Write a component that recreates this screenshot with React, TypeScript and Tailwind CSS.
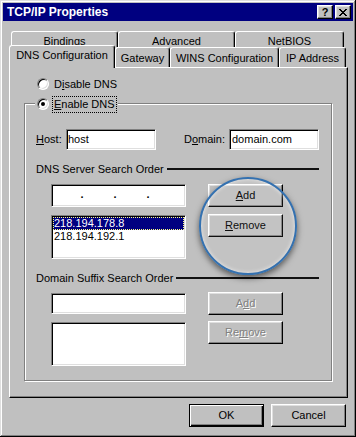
import type { ReactNode } from 'react';

const raised =
  'bg-[#c0c0c0] border border-t-white border-l-white border-r-black border-b-black shadow-[inset_-1px_-1px_#808080,inset_1px_1px_#dfdfdf]';
const sunken =
  'bg-white border border-t-[#808080] border-l-[#808080] border-r-white border-b-white shadow-[inset_1px_1px_#000,inset_-1px_-1px_#dfdfdf]';

function Button({ children, disabled = false, isDefault = false }: { children: ReactNode; disabled?: boolean; isDefault?: boolean }) {
  const frame = isDefault
    ? 'bg-[#c0c0c0] border border-black shadow-[inset_1px_1px_#fff,inset_-1px_-1px_#000,inset_-2px_-2px_#808080]'
    : raised;
  return (
    <div className={`w-[75px] h-[23px] flex items-center justify-center ${frame} ${disabled ? 'text-[#808080] [text-shadow:1px_1px_#fff]' : 'text-black'}`}>
      <span>{children}</span>
    </div>
  );
}

function Radio({ checked = false }: { checked?: boolean }) {
  return (
    <div className="w-[12px] h-[12px] shrink-0 rounded-full bg-white border border-t-[#808080] border-l-[#808080] border-r-white border-b-white shadow-[inset_1px_1px_#000,inset_-1px_-1px_#dfdfdf] flex items-center justify-center">
      {checked && <div className="w-[4px] h-[4px] rounded-full bg-black" />}
    </div>
  );
}

function Key({ children }: { children: ReactNode }) {
  return <u className="underline underline-offset-[1px]">{children}</u>;
}

function SectionLabel({ text }: { text: string }) {
  return (
    <div className="flex items-center h-[12px] ml-[11px] mr-[12px]">
      <span>{text}</span>
      <div className="flex-1 h-[2px] bg-[#111] ml-[3px]" />
    </div>
  );
}

const backTab = 'h-[16px] pt-[4px] bg-[#c0c0c0] border-t border-l border-r border-white border-r-black rounded-t-[3px] shadow-[inset_-1px_0_#808080] flex justify-center';
const frontTab = 'h-[20px] pt-[5px] bg-[#c0c0c0] border-t border-l border-r border-white border-r-black rounded-t-[3px] shadow-[inset_-1px_0_#808080] flex justify-center';

export default function App() {
  return (
    <div className="relative w-[356px] h-[437px] bg-[#c0c0c0] p-[3px] font-['Liberation_Sans',Arial,sans-serif] text-[11px] leading-none text-black shadow-[inset_-1px_-1px_#000,inset_1px_1px_#dfdfdf,inset_-2px_-2px_#808080,inset_2px_2px_#fff]">
      {/* title bar */}
      <div className="h-[18px] bg-[#000080] flex items-center justify-between pl-[4px] pr-[2px]">
        <span className="text-white font-bold text-[12px]">TCP/IP Properties</span>
        <div className="flex gap-[2px]">
          <div className={`${raised} w-[16px] h-[14px] flex items-center justify-center font-bold text-[11px]`}>?</div>
          <div className={`${raised} w-[16px] h-[14px] flex items-center justify-center`}>
            <svg width="8" height="7" viewBox="0 0 8 7" shapeRendering="crispEdges">
              <rect x="0" y="0" width="2" height="1" fill="#000" />
              <rect x="6" y="0" width="2" height="1" fill="#000" />
              <rect x="1" y="1" width="2" height="1" fill="#000" />
              <rect x="5" y="1" width="2" height="1" fill="#000" />
              <rect x="2" y="2" width="4" height="1" fill="#000" />
              <rect x="3" y="3" width="2" height="1" fill="#000" />
              <rect x="2" y="4" width="4" height="1" fill="#000" />
              <rect x="1" y="5" width="2" height="1" fill="#000" />
              <rect x="5" y="5" width="2" height="1" fill="#000" />
              <rect x="0" y="6" width="2" height="1" fill="#000" />
              <rect x="6" y="6" width="2" height="1" fill="#000" />
            </svg>
          </div>
        </div>
      </div>

      <div className="px-[6px]">
        {/* tabs, back row */}
        <div className="flex ml-[2px] mt-[10px]">
          <div className={`${backTab} w-[107px]`}>Bindings</div>
          <div className={`${backTab} w-[117px]`}>Advanced</div>
          <div className={`${backTab} w-[109px]`}>NetBIOS</div>
        </div>
        {/* tabs, front row */}
        <div className="flex items-end h-[22px] -mt-[2px]">
          <div className="relative z-10 w-[106px] h-[23px] -mb-[1px] pt-[4px] bg-[#c0c0c0] border-t border-l border-r border-white border-r-black rounded-t-[3px] shadow-[inset_-1px_0_#808080] flex justify-center">
            DNS Configuration
          </div>
          <div className={`${frontTab} w-[55px]`}>Gateway</div>
          <div className={`${frontTab} w-[109px]`}>WINS Configuration</div>
          <div className={`${frontTab} w-[67px]`}>IP Address</div>
        </div>

        {/* tab panel */}
        <div className="w-[339px] h-[331px] bg-[#c0c0c0] border border-white border-r-black border-b-black shadow-[inset_-1px_-1px_#808080]">
          <div className="flex items-center h-[12px] mt-[10px] ml-[27px]">
            <Radio />
            <span className="ml-[5px]">D<Key>i</Key>sable DNS</span>
          </div>

          <div className="mt-[13px] ml-[14px] w-[308px] h-[278px] border border-[#808080] shadow-[inset_1px_1px_#fff,1px_1px_#fff]">
            <div className="flex items-center w-fit h-[12px] -mt-[6px] ml-[10px] px-[2px] bg-[#c0c0c0]">
              <Radio checked />
              <span className="ml-[4px] px-[1px] leading-[15px] outline outline-1 outline-dotted outline-black">
                <Key>E</Key>nable DNS
              </span>
            </div>

            <div className="flex items-center h-[21px] mt-[19px] ml-[11px]">
              <span className="w-[30px]"><Key>H</Key>ost:</span>
              <div className={`${sunken} w-[90px] h-[21px] flex items-center pl-[1px]`}>host</div>
              <span className="w-[45px] ml-[28px]">D<Key>o</Key>main:</span>
              <div className={`${sunken} w-[90px] h-[21px] flex items-center pl-[2px]`}>domain.com</div>
            </div>

            <div className="mt-[13px]">
              <SectionLabel text="DNS Server Search Order" />
            </div>

            <div className="flex mt-[9px] ml-[26px]">
              <div className="w-[135px]">
                <div className={`${sunken} h-[23px] flex items-center pl-[27px] gap-[27px] pb-[2px] font-bold`}>
                  <span className="w-[6px] text-center">.</span>
                  <span className="w-[6px] text-center">.</span>
                  <span className="w-[6px] text-center">.</span>
                </div>
                <div className={`${sunken} h-[44px] mt-[8px] p-[1px]`}>
                  <div className="h-[13px] bg-[#000080] text-white pl-[1px] flex items-center outline outline-1 outline-dotted outline-[#ffff80] -outline-offset-1">
                    218.194.178.8
                  </div>
                  <div className="h-[13px] pl-[1px] flex items-center">218.194.192.1</div>
                </div>
              </div>
              <div className="ml-[22px] flex flex-col gap-[7px]">
                <Button><Key>A</Key>dd</Button>
                <Button><Key>R</Key>emove</Button>
              </div>
            </div>

            <div className="mt-[13px]">
              <SectionLabel text="Domain Suffix Search Order" />
            </div>

            <div className="flex mt-[8px] ml-[26px]">
              <div className="w-[135px] pt-[1px]">
                <div className={`${sunken} h-[21px]`} />
                <div className={`${sunken} h-[44px] mt-[8px]`} />
              </div>
              <div className="ml-[22px] flex flex-col gap-[6px]">
                <Button disabled>A<Key>d</Key>d</Button>
                <Button disabled>Re<Key>m</Key>ove</Button>
              </div>
            </div>
          </div>
        </div>

        <div className="flex justify-end gap-[7px] mt-[6px] pr-[1px]">
          <Button isDefault>OK</Button>
          <Button>Cancel</Button>
        </div>
      </div>

      {/* magnifier ring */}
      <div className="pointer-events-none absolute left-[199px] top-[177px] w-[98px] h-[98px] rounded-full border-2 border-[#3471b0] bg-white/[0.06] shadow-[0_3px_6px_rgba(0,0,0,0.55),inset_0_0_4px_rgba(255,255,255,0.7)]" />
    </div>
  );
}
